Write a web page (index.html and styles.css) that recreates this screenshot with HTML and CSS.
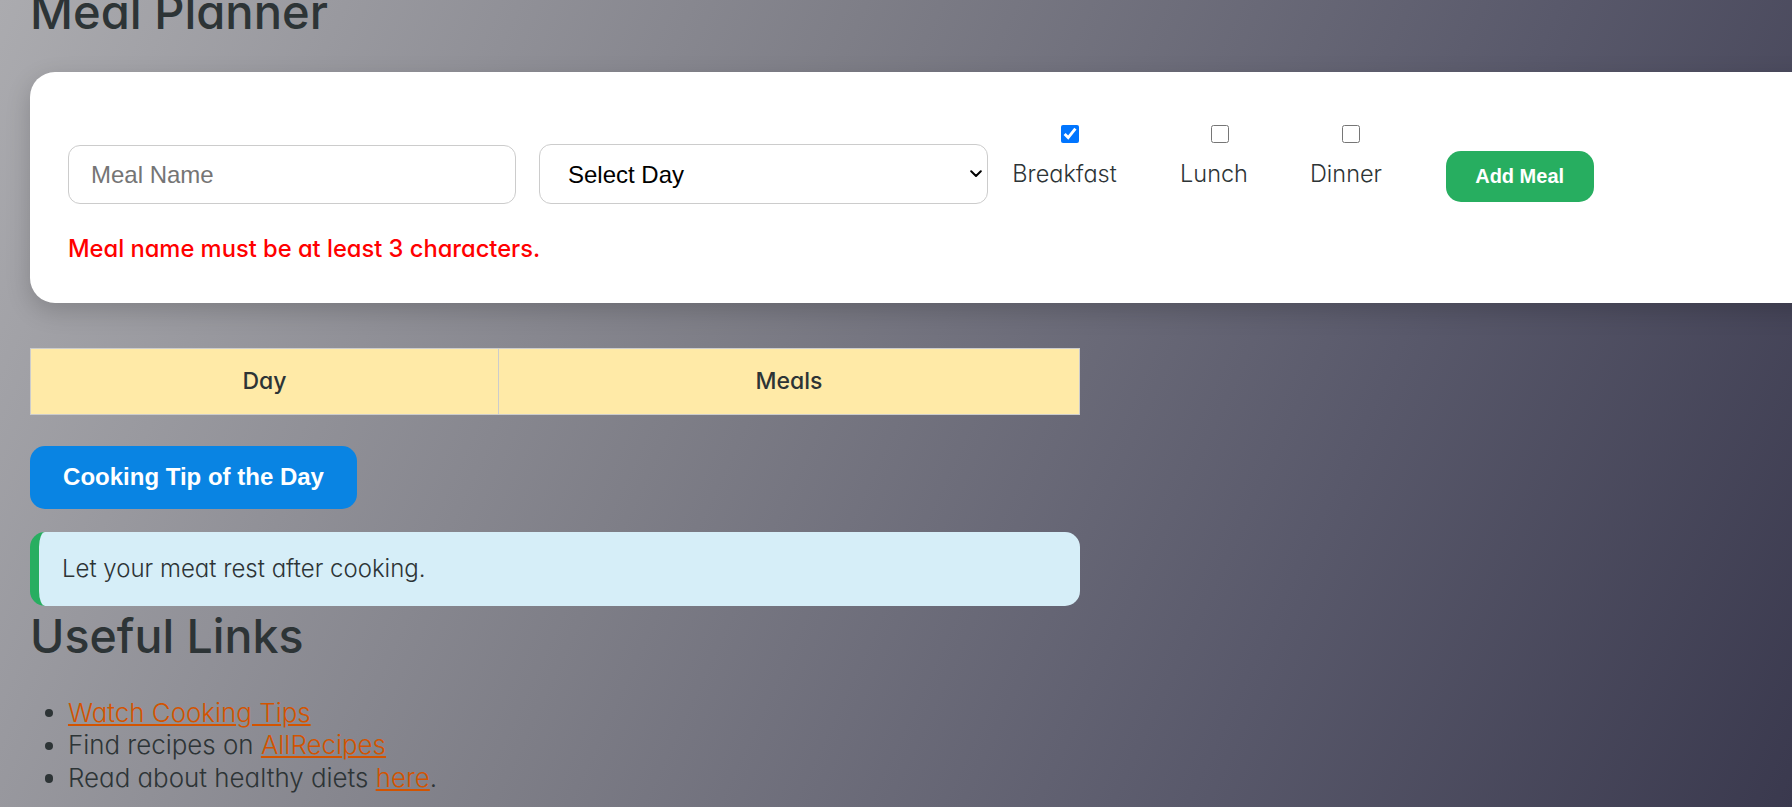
FILE: index.html
```html
<!DOCTYPE html>
<html lang="en">
<head>
<meta charset="utf-8">
<title>Meal Planner</title>
<link rel="stylesheet" href="styles.css">
</head>
<body>
<div class="page">
  <h1 class="title">Meal Planner</h1>
  <div class="card">
    <form class="meal-form">
      <input class="field field-name" type="text" placeholder="Meal Name">
      <div class="select-wrap">
        <select class="field field-day">
          <option>Select Day</option>
          <option>Monday</option>
          <option>Tuesday</option>
          <option>Wednesday</option>
          <option>Thursday</option>
          <option>Friday</option>
          <option>Saturday</option>
          <option>Sunday</option>
        </select>
        <svg class="chevron" width="12" height="8" viewBox="0 0 12 8" aria-hidden="true"><path d="M1.2 1.3 L6 6 L10.8 1.3" fill="none" stroke="#000" stroke-width="2" stroke-linecap="round" stroke-linejoin="round"/></svg>
      </div>
      <label class="check check-breakfast"><input type="checkbox" checked><span>Breakfast</span></label>
      <label class="check check-lunch"><input type="checkbox"><span>Lunch</span></label>
      <label class="check check-dinner"><input type="checkbox"><span>Dinner</span></label>
      <button class="btn btn-add" type="button">Add Meal</button>
    </form>
    <p class="error">Meal name must be at least 3 characters.</p>
  </div>
  <table class="plan">
    <thead><tr><th class="col-day">Day</th><th>Meals</th></tr></thead>
    <tbody></tbody>
  </table>
  <button class="btn btn-tip" type="button">Cooking Tip of the Day</button>
  <div class="tip">Let your meat rest after cooking.</div>
  <h2 class="links-title">Useful Links</h2>
  <ul class="links">
    <li><a href="#">Watch Cooking Tips</a></li>
    <li>Find recipes on <a href="#">AllRecipes</a></li>
    <li>Read about healthy diets <a href="#">here</a>.</li>
  </ul>
</div>
</body>
</html>
```
FILE: styles.css
```css
html, body { margin: 0; padding: 0; overflow: hidden; }
html { background: linear-gradient(115deg, #ababaf 0%, #7e7e87 40%, #59596b 72%, #3a394e 100%); min-height: 100%; }
body { font-family: Inter, "Noto Sans", sans-serif; font-feature-settings: "cv11"; color: #2d3436; height: 807px; }
.page { padding: 0 0 0 30px; }
.title { margin: -16.1px 0 0; font-size: 47.1px; line-height: 1.2; font-weight: 500; }
.card { margin-top: 31.6px; width: 1800px; box-sizing: border-box; background: #fff; border-radius: 25px; padding: 48px 40px 39px 38px; box-shadow: 0 8px 24px rgba(0,0,0,.18); }
.meal-form { display: flex; align-items: flex-start; }
.field { box-sizing: border-box; font-family: "Liberation Sans", Arial, sans-serif; font-size: 24px; border: 1px solid #ccc; border-radius: 12px; background: #fff; color: #000; }
.field-name { width: 448.4px; height: 59px; margin-top: 25px; padding: 0 20px 0 22px; }
.field-name::placeholder { color: #757575; }
.select-wrap { position: relative; margin: 24.3px 0 0 22.6px; }
.field-day { display: block; width: 449.3px; height: 59.7px; padding: 0 30px 0 28px; appearance: none; -webkit-appearance: none; }
.chevron { position: absolute; right: 6px; top: 26px; pointer-events: none; }
.check { display: flex; flex-direction: column; align-items: center; font-size: 23.5px; line-height: 1.2; font-weight: 300; }
.check input { width: 18px; height: 18px; margin: 5px 0 17.06px 11px; }
.check span { white-space: nowrap; }
.check-breakfast { width: 104.3px; margin-left: 24.1px; }
.check-lunch { width: 63.3px; margin-left: 65.7px; }
.check-dinner { width: 69.3px; margin-left: 65.7px; }
.btn { font-family: "Liberation Sans", Arial, sans-serif; font-weight: bold; color: #fff; border: none; padding: 0; cursor: pointer; }
.btn-add { width: 148px; height: 51.6px; margin: 30.7px 0 0 65px; background: #27ae60; border-radius: 15px; font-size: 20px; }
.error { margin: 31.2px 0 0; color: #f00; font-size: 23.7px; line-height: 1.2; font-weight: 500; }
.plan { margin-top: 45.3px; width: 1050px; border-collapse: collapse; }
.plan th { background: #ffeaa7; border: 1px solid #ccc; padding: 19.5px 0 18.3px; font-size: 23px; line-height: 1.2; font-weight: 500; }
.plan th.col-day { width: 467px; }
.btn-tip { display: block; margin-top: 30.3px; width: 327px; height: 63.3px; background: #0984e3; border-radius: 15px; font-size: 24px; }
.tip { margin-top: 22.7px; width: 1050px; box-sizing: border-box; background: #d6eef8; border-left: 9px solid #27ae60; border-radius: 15px; padding: 23.17px 22px 22.73px 23px; font-size: 24px; line-height: 1.2; font-weight: 300; }
.links-title { margin: 2.83px 0 0; font-size: 46.5px; line-height: 1.2; font-weight: 500; }
.links { margin: 31.8px 0 0; padding-left: 38px; list-style: none; font-size: 25.9px; line-height: 32.8px; font-weight: 300; }
.links li::before { content: ""; display: inline-block; width: 8.3px; height: 8.3px; border-radius: 50%; background: #2d3436; margin: 0 14.7px 0 -23px; vertical-align: 4.55px; }
.links a { color: #d35400; }
```
